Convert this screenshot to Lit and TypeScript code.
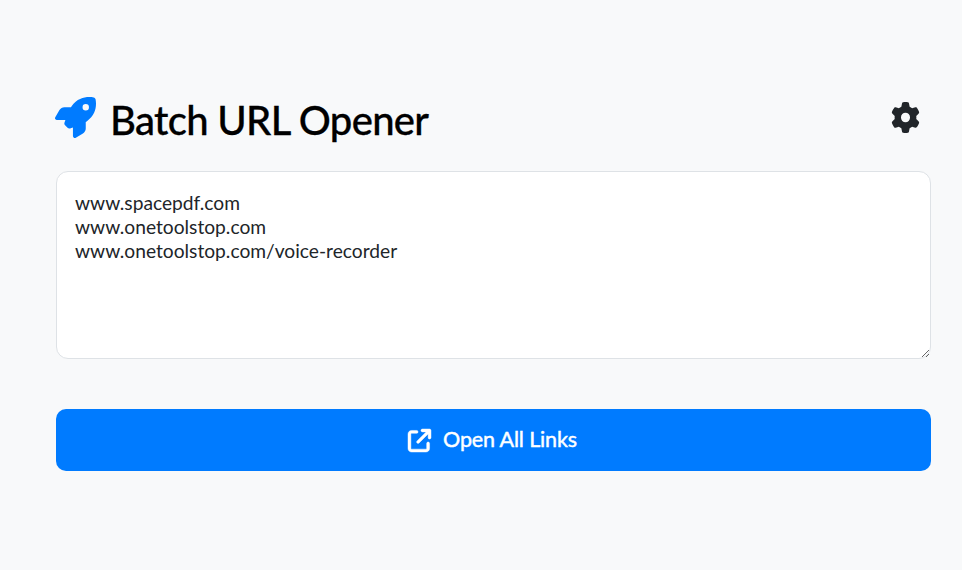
import { LitElement, html, css } from "lit";
import { customElement } from "lit/decorators.js";

@customElement("app-root")
export class AppRoot extends LitElement {
  static styles = css`
    :host { display: block; min-height: 570px; background: #f8f9fa; font-family: "Lato", "Noto Sans", sans-serif; color: #212529; }
    .wrap { padding: 88px 31px 0 56px; display: flex; flex-direction: column; }
    .head { display: flex; align-items: center; justify-content: space-between; height: 64px; margin-bottom: 19px; }
    .title { display: flex; align-items: center; gap: 14px; margin: 0 0 0 -1px; font-size: 40px; font-weight: 500; color: #000; letter-spacing: -0.68px; -webkit-text-stroke: 0.3px #000; }
    .rocket { width: 41px; height: 41px; color: #007bff; margin-bottom: 5px; }
    .gear { width: 29px; height: 31px; color: #212529; margin: 0 11px 5px 0; }
    textarea { box-sizing: border-box; height: 188px; width: 100%; border: 1px solid #dee2e6; border-radius: 12px; background: #fff; padding: 19px 18px; font: 400 19.2px/24px "Lato", sans-serif; color: #212529; outline: none; display: block; }
    button { margin-top: 50px; height: 62px; padding: 0 2px 2px 0; border: 0; border-radius: 10px; background: #007bff; color: #fff; font: 400 21.5px "Lato", sans-serif; letter-spacing: -0.14px; -webkit-text-stroke: 0.45px #fff; display: flex; align-items: center; justify-content: center; gap: 12px; }
    button svg { width: 23px; height: 23px; margin-top: 2px; overflow: visible; stroke: currentColor; stroke-width: 10; }
  `;
  render() {
    return html`<div class="wrap">
      <div class="head">
        <h1 class="title">
          <svg class="rocket" viewBox="0 0 512 512" fill="currentColor"><path d="M156.600 384.900L125.700 354c-8.500-8.500-11.500-20.800-7.700-32.200c3-8.900 7-20.500 11.800-33.800L24 288c-8.600 0-16.600-4.600-20.900-12.100s-4.200-16.700 .2-24.100l52.500-88.500c13-21.900 36.500-35.300 61.900-35.300l82.300 0c2.400-4 4.800-7.700 7.200-11.300C289.100-4.100 411.100-8.100 483.900 5.300c11.600 2.100 20.600 11.200 22.800 22.800c13.400 72.900 9.300 194.800-111.400 276.700c-3.500 2.400-7.300 4.800-11.300 7.200l0 82.300c0 25.400-13.400 49-35.300 61.900l-88.500 52.500c-7.400 4.400-16.600 4.500-24.100 .2s-12.100-12.200-12.100-20.900l0-107.200c-14.100 4.900-26.400 8.900-35.700 11.900c-11.200 3.600-23.400 .5-31.800-7.800zM384 168a40 40 0 1 0 0-80 40 40 0 1 0 0 80z"/></svg>
          Batch URL Opener
        </h1>
        <svg class="gear" viewBox="0 0 512 512" fill="currentColor" preserveAspectRatio="none"><path d="M495.900 166.600c3.200 8.700 .5 18.400-6.400 24.600l-43.300 39.400c1.100 8.300 1.700 16.800 1.700 25.400s-.6 17.100-1.700 25.400l43.300 39.400c6.900 6.200 9.600 15.900 6.400 24.600c-4.400 11.900-9.700 23.300-15.800 34.300l-4.700 8.100c-6.600 11-14 21.400-22.100 31.200c-5.900 7.200-15.700 9.600-24.500 6.800l-55.700-17.700c-13.400 10.300-28.200 18.900-44 25.400l-12.500 57.100c-2 9.100-9 16.300-18.200 17.800c-13.800 2.300-28 3.500-42.500 3.500s-28.700-1.200-42.500-3.500c-9.200-1.500-16.200-8.700-18.200-17.800l-12.500-57.100c-15.800-6.500-30.600-15.100-44-25.400L83.100 425.900c-8.800 2.800-18.600 .3-24.500-6.800c-8.100-9.800-15.500-20.200-22.100-31.200l-4.700-8.100c-6.100-11-11.400-22.400-15.800-34.300c-3.200-8.700-.5-18.400 6.400-24.600l43.300-39.400C64.600 273.100 64 264.600 64 256s.6-17.100 1.700-25.400L22.400 191.200c-6.900-6.200-9.600-15.900-6.400-24.600c4.400-11.900 9.700-23.300 15.800-34.300l4.700-8.100c6.600-11 14-21.400 22.100-31.200c5.900-7.200 15.700-9.600 24.500-6.800l55.700 17.700c13.400-10.300 28.200-18.900 44-25.400l12.500-57.100c2-9.100 9-16.300 18.200-17.800C227.300 1.200 241.500 0 256 0s28.700 1.200 42.500 3.500c9.200 1.500 16.200 8.700 18.200 17.800l12.500 57.100c15.800 6.500 30.600 15.100 44 25.400l55.700-17.700c8.800-2.800 18.600-.3 24.500 6.800c8.100 9.800 15.500 20.200 22.100 31.200l4.700 8.100c6.100 11 11.400 22.400 15.800 34.300zM256 336a80 80 0 1 0 0-160 80 80 0 1 0 0 160z"/></svg>
      </div>
      <textarea .value=${"www.spacepdf.com\nwww.onetoolstop.com\nwww.onetoolstop.com/voice-recorder"}></textarea>
      <button>
        <svg viewBox="0 0 512 512" fill="currentColor"><path d="M320 0c-17.700 0-32 14.300-32 32s14.300 32 32 32h82.700L201.400 265.400c-12.500 12.500-12.500 32.800 0 45.300s32.800 12.500 45.300 0L448 109.300V192c0 17.700 14.300 32 32 32s32-14.300 32-32V32c0-17.700-14.300-32-32-32H320zM80 32C35.800 32 0 67.800 0 112V432c0 44.200 35.800 80 80 80H400c44.200 0 80-35.800 80-80V320c0-17.700-14.300-32-32-32s-32 14.300-32 32V432c0 8.800-7.200 16-16 16H80c-8.800 0-16-7.200-16-16V112c0-8.800 7.200-16 16-16H192c17.700 0 32-14.300 32-32s-14.300-32-32-32H80z"/></svg>
        Open All Links
      </button>
    </div>`;
  }
}
